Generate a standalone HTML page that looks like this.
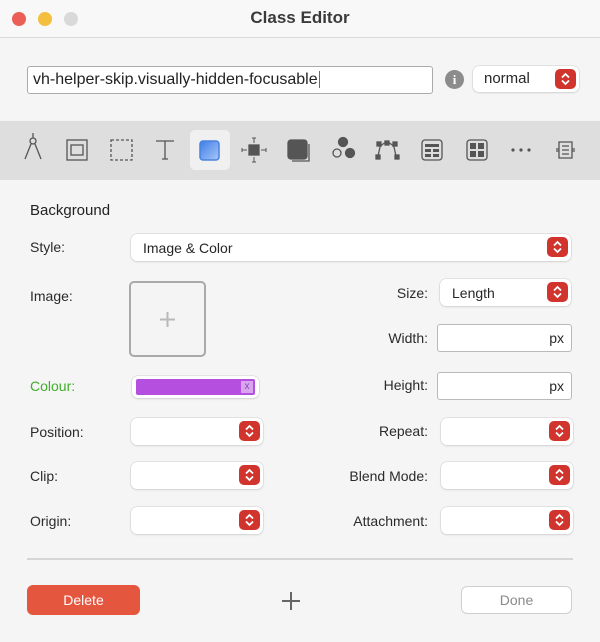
<!DOCTYPE html>
<html><head><meta charset="utf-8"><style>
*{box-sizing:border-box;margin:0;padding:0}
body{width:600px;height:642px;background:#f5f5f5;font-family:"Liberation Sans",sans-serif;color:#262626;position:relative;overflow:hidden;font-size:14px}
.a{position:absolute}
.tl{width:14px;height:14px;border-radius:50%;top:12px}
.lbl{position:absolute;font-size:14px;color:#2a2a2a}
.r{text-align:right}
.sel{position:absolute;background:#fff;border-radius:6px;box-shadow:0 0 0 0.5px #cfcfcf,0 1px 2px rgba(0,0,0,.12)}
.st{position:absolute;right:3px;top:3px;width:21px;height:20px;background:#d0342c;border-radius:5px}
.st svg{position:absolute;left:5px;top:3px}
.inp{position:absolute;background:#fff;border:1px solid #b9b9b9;border-radius:3px}
.px{position:absolute;right:7px;top:5px;font-size:14px}
</style></head><body>
<div class="a" style="left:0;top:0;width:600px;height:38px;background:#f8f8f8;border-bottom:1px solid #dadada"></div>
<div class="a tl" style="left:12px;background:#ec5f57"></div>
<div class="a tl" style="left:38px;background:#f4be3f"></div>
<div class="a tl" style="left:64px;background:#d9d9d9"></div>
<div class="a" style="left:0;width:600px;top:8px;text-align:center;font-weight:bold;font-size:17px;color:#3a3a3a">Class Editor</div>

<div class="inp" style="left:27px;top:66px;width:406px;height:28px;border-color:#aaa"><span class="a" style="left:5px;top:4px;font-size:16px;color:#222">vh-helper-skip.visually-hidden-focusable<span style="border-right:1px solid #e33;margin-left:1px"></span></span></div>
<div class="a" style="left:445px;top:70px;width:19px;height:19px;border-radius:50%;background:#8c8c8c;color:#fff;font-weight:bold;font-size:13px;text-align:center;line-height:19px;font-family:'Liberation Serif',serif">i</div>
<div class="sel" style="left:473px;top:66px;width:106px;height:26px"><span class="a" style="left:11px;top:4px;font-size:15px">normal</span><div class="st"><svg width="11" height="14" viewBox="0 0 11 14"><path d="M2 5.5L5.5 2 9 5.5M2 8.5L5.5 12 9 8.5" stroke="#fff" stroke-width="1.8" fill="none"/></svg></div></div>

<div class="a" style="left:0;top:121px;width:600px;height:59px;background:#dedede"></div>
<div class="a" style="left:190px;top:130px;width:40px;height:40px;background:#f0f0f0;border-radius:5px"></div>
<svg class="a" style="left:0;top:121px" width="600" height="59" viewBox="0 0 600 59" fill="none" stroke="#555" stroke-width="1.3">
<circle cx="33" cy="20" r="3"/><path d="M31 23L25 38M35 23L41 38M33 12V17"/>
<rect x="67" y="19" width="20" height="20"/><rect x="71" y="24" width="12" height="10"/>
<rect x="111" y="19" width="21" height="20" stroke-dasharray="3 2"/>
<path d="M156 20H174M165 20V38M162 38H168"/>
<rect x="200" y="20" width="19" height="19" rx="3" fill="url(#g)" stroke="#4a82e0" stroke-width="1.5"/>
<defs><linearGradient id="g" x1="0" y1="0" x2="1" y2="1"><stop offset="0" stop-color="#3d7de8"/><stop offset="1" stop-color="#a9c8f7"/></linearGradient></defs>
<rect x="249" y="24" width="10" height="10" fill="#555"/><path d="M254 17V22M252 17H256M254 36V41M252 41H256M242 29H247M242 27V31M261 29H266M266 27V31" stroke-width="1"/>
<rect x="288" y="19" width="19" height="19" rx="3" fill="#555"/><path d="M309 23V40H292"/>
<circle cx="343" cy="21" r="4.5" fill="#555"/><circle cx="337" cy="32" r="4"/><circle cx="350" cy="32" r="4.5" fill="#555"/>
<path d="M380 26Q387 17 394 26M380 26L378 35M394 26L396 35"/><rect x="377" y="21" width="4" height="4" fill="#555"/><rect x="393" y="21" width="4" height="4" fill="#555"/><rect x="385" y="20" width="4" height="4" fill="#555"/><rect x="376" y="34" width="4" height="4" fill="#555"/><rect x="395" y="34" width="4" height="4" fill="#555"/>
<rect x="422" y="19" width="20" height="20" rx="3"/><path d="M425 23H439V26H425ZM425 28H431V31H425ZM433 28H439V31H433ZM425 33H431V36H425ZM433 33H439V36H433Z" fill="#555" stroke="none"/>
<rect x="467" y="19" width="20" height="20" rx="3"/><path d="M470 22H476V28H470ZM478 22H484V28H478ZM470 30H476V36H470ZM478 30H484V36H478Z" fill="#555" stroke="none"/>
<circle cx="513" cy="29" r="1.6" fill="#555" stroke="none"/><circle cx="521" cy="29" r="1.6" fill="#555" stroke="none"/><circle cx="529" cy="29" r="1.6" fill="#555" stroke="none"/>
<path d="M559 21H572V37H559ZM556 28H559M556 30H559M572 28H575M572 30H575M562 25H569M562 29H569M562 33H569"/>
</svg>

<div class="lbl" style="left:30px;top:202px;font-size:15px;color:#222">Background</div>

<div class="lbl" style="left:30px;top:239px">Style:</div>
<div class="sel" style="left:131px;top:234px;width:440px;height:27px"><span class="a" style="left:12px;top:6px">Image &amp; Color</span><div class="st"><svg width="11" height="14" viewBox="0 0 11 14"><path d="M2 5.5L5.5 2 9 5.5M2 8.5L5.5 12 9 8.5" stroke="#fff" stroke-width="1.8" fill="none"/></svg></div></div>

<div class="lbl" style="left:30px;top:288px">Image:</div>
<div class="a" style="left:129px;top:281px;width:77px;height:76px;border:2px solid #a9a9a9;border-radius:5px;background:#f4f4f4"><svg class="a" style="left:28px;top:28px" width="17" height="17"><path d="M8.5 1V16M1 8.5H16" stroke="#b8b8b8" stroke-width="2"/></svg></div>

<div class="lbl r" style="left:330px;width:98px;top:285px">Size:</div>
<div class="sel" style="left:440px;top:279px;width:131px;height:27px"><span class="a" style="left:12px;top:6px">Length</span><div class="st"><svg width="11" height="14" viewBox="0 0 11 14"><path d="M2 5.5L5.5 2 9 5.5M2 8.5L5.5 12 9 8.5" stroke="#fff" stroke-width="1.8" fill="none"/></svg></div></div>

<div class="lbl r" style="left:330px;width:98px;top:330px">Width:</div>
<div class="inp" style="left:437px;top:324px;width:135px;height:28px"><span class="px">px</span></div>

<div class="lbl" style="left:30px;top:378px;color:#3fae2a">Colour:</div>
<div class="sel" style="left:132px;top:376px;width:127px;height:22px"><div class="a" style="left:4px;top:3px;width:119px;height:16px;background:#b44fe0;border-radius:2px"></div><div class="a" style="left:109px;top:5px;width:12px;height:12px;background:#d8a6ef;color:#8d46b3;font-size:10px;text-align:center;line-height:11px">x</div></div>

<div class="lbl r" style="left:330px;width:98px;top:377px">Height:</div>
<div class="inp" style="left:437px;top:372px;width:135px;height:28px"><span class="px">px</span></div>

<div class="lbl" style="left:30px;top:424px">Position:</div>
<div class="sel" style="left:131px;top:418px;width:132px;height:27px"><div class="st"><svg width="11" height="14" viewBox="0 0 11 14"><path d="M2 5.5L5.5 2 9 5.5M2 8.5L5.5 12 9 8.5" stroke="#fff" stroke-width="1.8" fill="none"/></svg></div></div>
<div class="lbl r" style="left:300px;width:128px;top:423px">Repeat:</div>
<div class="sel" style="left:441px;top:418px;width:132px;height:27px"><div class="st"><svg width="11" height="14" viewBox="0 0 11 14"><path d="M2 5.5L5.5 2 9 5.5M2 8.5L5.5 12 9 8.5" stroke="#fff" stroke-width="1.8" fill="none"/></svg></div></div>

<div class="lbl" style="left:30px;top:468px">Clip:</div>
<div class="sel" style="left:131px;top:462px;width:132px;height:27px"><div class="st"><svg width="11" height="14" viewBox="0 0 11 14"><path d="M2 5.5L5.5 2 9 5.5M2 8.5L5.5 12 9 8.5" stroke="#fff" stroke-width="1.8" fill="none"/></svg></div></div>
<div class="lbl r" style="left:300px;width:128px;top:468px">Blend Mode:</div>
<div class="sel" style="left:441px;top:462px;width:132px;height:27px"><div class="st"><svg width="11" height="14" viewBox="0 0 11 14"><path d="M2 5.5L5.5 2 9 5.5M2 8.5L5.5 12 9 8.5" stroke="#fff" stroke-width="1.8" fill="none"/></svg></div></div>

<div class="lbl" style="left:30px;top:513px">Origin:</div>
<div class="sel" style="left:131px;top:507px;width:132px;height:27px"><div class="st"><svg width="11" height="14" viewBox="0 0 11 14"><path d="M2 5.5L5.5 2 9 5.5M2 8.5L5.5 12 9 8.5" stroke="#fff" stroke-width="1.8" fill="none"/></svg></div></div>
<div class="lbl r" style="left:300px;width:128px;top:513px">Attachment:</div>
<div class="sel" style="left:441px;top:507px;width:132px;height:27px"><div class="st"><svg width="11" height="14" viewBox="0 0 11 14"><path d="M2 5.5L5.5 2 9 5.5M2 8.5L5.5 12 9 8.5" stroke="#fff" stroke-width="1.8" fill="none"/></svg></div></div>

<div class="a" style="left:27px;top:558px;width:546px;height:2px;background:#d6d6d6"></div>

<div class="a" style="left:27px;top:585px;width:113px;height:30px;background:#e5563f;border-radius:6px;color:#fff;text-align:center;line-height:30px;font-size:14px">Delete</div>
<svg class="a" style="left:281px;top:591px" width="20" height="20"><path d="M10 1V19M1 10H19" stroke="#666" stroke-width="2"/></svg>
<div class="a" style="left:461px;top:586px;width:111px;height:28px;background:#fff;border:1px solid #cfcfcf;border-radius:6px;color:#8a8a8a;text-align:center;line-height:26px;font-size:14px">Done</div>
</body></html>
